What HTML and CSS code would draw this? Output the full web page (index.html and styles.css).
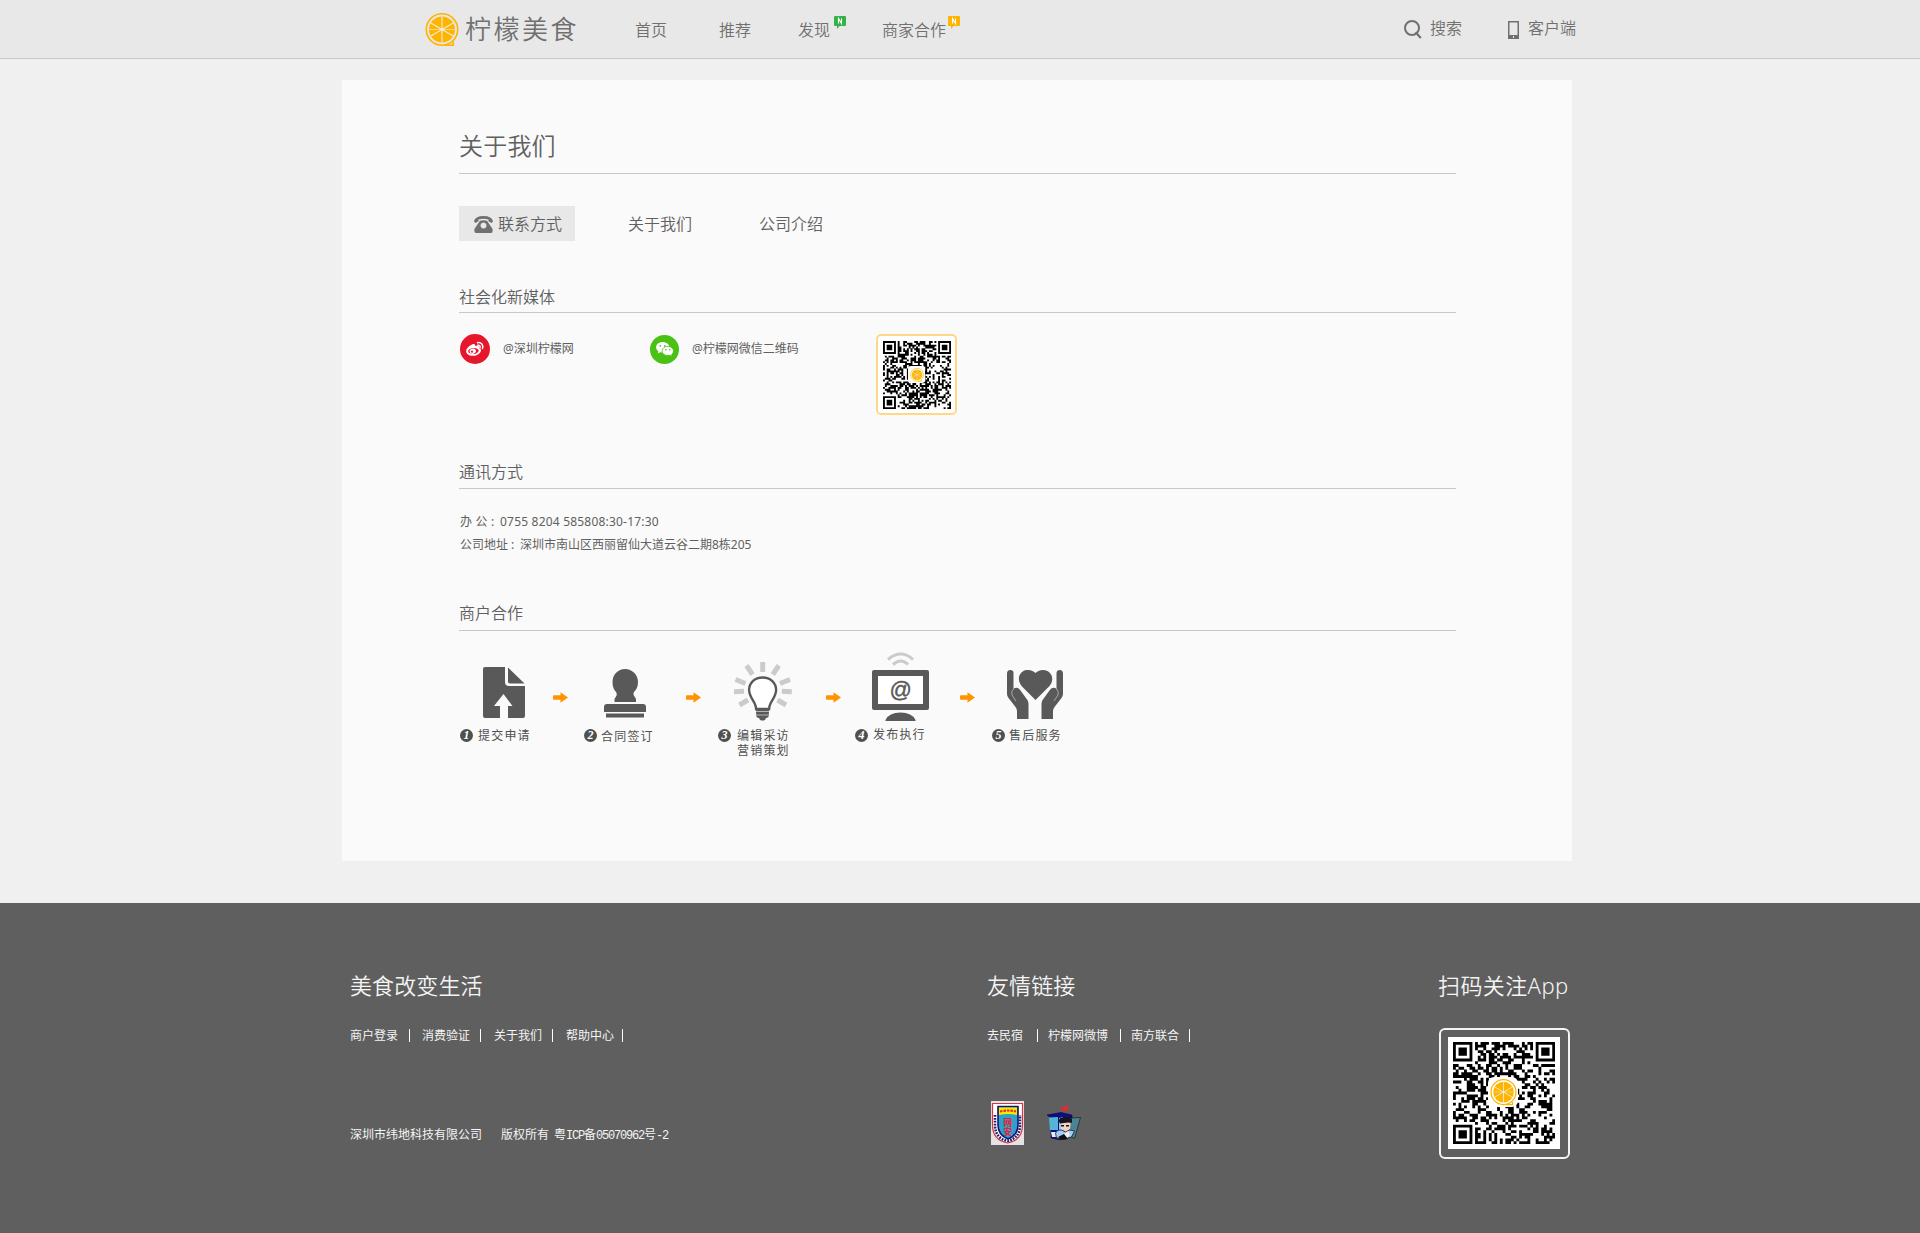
FILE: index.html
```html
<!DOCTYPE html>
<html lang="zh-CN">
<head>
<meta charset="utf-8">
<title>柠檬美食 - 关于我们</title>
<link rel="stylesheet" href="styles.css">
</head>
<body>
<svg class="defs" width="0" height="0">
  <symbol id="lemon" viewBox="0 0 34 34">
    <circle cx="17" cy="16.500" r="15.700" fill="none" stroke="#ffb400" stroke-width="1.600"/>
    <path d="M20 32.300h8.300v-3.600" fill="none" stroke="#ffb400" stroke-width="1.600"/>
    <circle cx="17" cy="16.500" r="13" fill="#ffb400"/>
    <path d="M17 3.500v26M5.700 10l22.600 13M28.300 10L5.700 23" stroke="#f0ece0" stroke-width="1.100"/>
    <path d="M4 16.500h26" stroke="#f0ece0" stroke-width=".6"/>
    <circle cx="17" cy="16.500" r="1.300" fill="#f0ece0"/>
  </symbol>
  <symbol id="arrow" viewBox="0 0 14 10"><path d="M.8 3h6.200V.2L14 5 7 9.900V7H.8Q0 7 0 6.200V3.800Q0 3 .8 3z" fill="#ff9300"/></symbol>
</svg>

<header class="topbar">
  <a class="logo"><svg class="logo-mark"><use href="#lemon"/></svg><span>柠檬美食</span></a>
  <nav class="nav">
    <a>首页</a><a>推荐</a>
    <a>发现<svg class="tag" viewBox="0 0 12 13"><path d="M1 0h10q1 0 1 1v8q0 1-1 1H5.500L3 13v-3H1q-1 0-1-1V1q0-1 1-1z" fill="#36b14a"/><path d="M4.500 7.500v-5l3 5v-5" fill="none" stroke="#fff" stroke-width="1.100"/></svg></a>
    <a>商家合作<svg class="tag" viewBox="0 0 12 13"><path d="M1 0h10q1 0 1 1v8q0 1-1 1H5.500L3 13v-3H1q-1 0-1-1V1q0-1 1-1z" fill="#ffb400"/><path d="M4.500 7.500v-5l3 5v-5" fill="none" stroke="#fff" stroke-width="1.100"/></svg></a>
  </nav>
  <div class="tools">
    <a><svg width="18" height="19" viewBox="0 0 18 19"><circle cx="8" cy="8" r="7" fill="none" stroke="#707070" stroke-width="2"/><path d="M11.500 12.300l5.300 5.700" stroke="#707070" stroke-width="2.200"/></svg><span>搜索</span></a>
    <a><svg width="11" height="18" viewBox="0 0 11 18"><path fill="#707070" fill-rule="evenodd" d="M0 0h11v18H0zM1.500 1.500v12.500h8V1.500zM5 15v2h1v-2z"/></svg><span>客户端</span></a>
  </div>
</header>

<main class="card">
  <h1>关于我们</h1>
  <div class="tabs">
    <a class="active"><svg width="19" height="17" viewBox="0 0 19 17"><path fill="#707070" d="M0 5.500Q1 0 9.500 0T19 5.500L17.600 7 14.500 5.200V3.600Q9.500 2 4.500 3.600v1.600L1.400 7z"/><path fill="#707070" fill-rule="evenodd" d="M6 4.700Q9.500 3.600 13 4.700L18.600 13v2.300q0 1.700-1.600 1.700H2Q.4 17 .4 15.300V13zM9.500 6.400a3 3 0 1 0 .01 0z"/></svg>联系方式</a>
    <a>关于我们</a><a>公司介绍</a>
  </div>

  <h2>社会化新媒体</h2>
  <div class="social">
    <div class="account weibo"><svg width="30" height="30" viewBox="0 0 30 30"><circle cx="15" cy="15" r="15" fill="#e6162d"/><path fill="#fff" fill-rule="evenodd" d="M12.600 10.300c1.800-.6 3 .3 2.600 2 2.500-1 4.400-.4 3.800 1.600 1.500.5 2.200 1.400 2 2.600-.4 3-4.300 5.400-8.300 5.300-3.800-.1-6.800-2-6.500-4.900.3-2.600 3.900-5.900 6.400-6.600zm.6 3.700c-3 .2-5.200 1.800-5 3.600.2 1.700 2.500 2.700 5.400 2.500 2.900-.3 5.200-2 5-3.700-.2-1.700-2.500-2.600-5.400-2.400z"/><ellipse cx="12.800" cy="17.200" rx="3.200" ry="2.600" fill="#fff" transform="rotate(-18 12.800 17.200)"/><circle cx="12" cy="17.700" r="1.100" fill="#e6162d"/><path d="M17.500 8.700c3.700-.7 6.200 2.200 5 5.700M17.800 11.200c1.600-.3 2.700.9 2.200 2.500" fill="none" stroke="#fff" stroke-width="1.500" stroke-linecap="round"/></svg><span>@深圳柠檬网</span></div>
    <div class="account wechat"><svg width="29" height="29" viewBox="0 0 29 29"><circle cx="14.500" cy="14.500" r="14.500" fill="#4bc015"/><path fill="#fff" d="M12.500 7c-3.700 0-6.400 2.300-6.400 5.300 0 1.700.9 3.100 2.300 4.100l-.7 2 2.400-1.200 2.400.4c4.300 0 7-2.300 7-5.300S16.200 7 12.500 7z"/><path fill="#fff" stroke="#4bc015" stroke-width=".8" d="M17.800 11.400c3.200 0 5.700 2 5.700 4.600 0 1.500-.8 2.700-1.900 3.500l.5 1.900-2.200-1.100-2.100.3c-3.300 0-5.700-2-5.700-4.600s2.400-4.600 5.700-4.600z"/><g fill="#4bc015"><circle cx="10.300" cy="10.800" r=".9"/><circle cx="14.800" cy="10.800" r=".9"/><circle cx="16" cy="14.800" r=".8"/><circle cx="19.700" cy="14.800" r=".8"/></g></svg><span>@柠檬网微信二维码</span></div>
    <div class="qr qr-small"><svg class="code" data-seed="7" viewBox="0 0 37 37"></svg><i><svg><use href="#lemon"/></svg></i></div>
  </div>

  <h2>通讯方式</h2>
  <div class="contact"><p class="phone"><span>办 公 : </span>0755 8204 585808:30-17:30</p><p class="address"><span>公司地址 : </span>深圳市南山区西丽留仙大道云谷二期8栋205</p></div>

  <h2>商户合作</h2>
  <div class="steps">
    <div class="step s1">
      <svg width="42" height="52" viewBox="0 0 42 52"><path fill="#595959" d="M2 0h20v15q0 4 4 4h16v30q0 2-2 2H25V39h4.500L20.500 27 11 39h6v12H2q-2 0-2-2V2q0-2 2-2z"/><path fill="#595959" d="M25 .5L41.500 16.500H27q-2 0-2-2z"/></svg>
      <p><b>1</b><span>提交申请</span></p>
    </div>
    <svg class="arrow"><use href="#arrow"/></svg>
    <div class="step s2">
      <svg width="42" height="49" viewBox="0 0 42 49"><path fill="#595959" d="M21 0C28 0 34 5.500 34 13c0 5-2 8-4 10-1 1.500-.5 3 .5 4.500L32 30v3H10.500v-3l1.500-2.500c1-1.500 1-3 0-4.500-2-2-3.500-5-3.500-10C8.500 5.500 14 0 21 0zM3 35h36q3 0 3 3v5H0v-5q0-3 3-3zM2 44.500h38V48.500H2z"/></svg>
      <p><b>2</b><span>合同签订</span></p>
    </div>
    <svg class="arrow"><use href="#arrow"/></svg>
    <div class="step s3">
      <svg width="58" height="60" viewBox="0 0 58 60"><path stroke="#cbcbcb" stroke-width="5" fill="none" d="M28.700 1v10M12.500 4.500l6 9M44.800 4.500l-6 9M1.500 18.500l10 4M56 18.500l-10 4M0 30.800l10-.5M57.800 30.800l-10-.5M5.500 44l8.500-5M52 44l-8.500-5"/><path fill="#fff" stroke="#595959" stroke-width="2.400" d="M28.600 16.500c-8 0-13.500 5.500-13.500 12.500 0 8 7 11.500 7 19h13c0-7.500 7-11 7-19 0-7-5.500-12.500-13.500-12.500z"/><path fill="#595959" d="M22 47.500h13v3.500l-.5 5-3 1.500q0 2-3 2t-3-2l-3-1.500-.5-5z"/><path stroke="#ccc" stroke-width=".8" d="M22 50.500h13M22.500 54h12"/></svg>
      <p><b>3</b><span>编辑采访<br>营销策划</span></p>
    </div>
    <svg class="arrow"><use href="#arrow"/></svg>
    <div class="step s4">
      <svg width="57" height="69" viewBox="0 0 57 69"><path d="M16 7.500Q29 -3.500 41 7.500M21 12.500Q29 5.500 36 12.500" fill="none" stroke="#cbcbcb" stroke-width="3"/><path fill="#595959" fill-rule="evenodd" d="M2 18h53q2 0 2 2v36q0 2-2 2H2q-2 0-2-2V20q0-2 2-2zM13.500 68Q17 60.500 28.500 60.500T43.500 68v1h-30z"/><path fill="#fff" d="M6 24h45v28H6z"/><text x="28.700" y="45" text-anchor="middle" class="at">@</text></svg>
      <p><b>4</b><span>发布执行</span></p>
    </div>
    <svg class="arrow"><use href="#arrow"/></svg>
    <div class="step s5">
      <svg width="56" height="49" viewBox="0 0 56 49"><path fill="#595959" d="M28.500 30L15 16.500C8 8 14-.5 21 0c3.500.2 6 1.500 7.500 3C30 1.500 32.500 0 36 0c8 0 12.500 9 6.500 16z"/><g id="hand" fill="#595959"><path d="M0 3.500Q0 0 3.300 0T6.500 3.500V20q0-2.500 3-2.300 2 0 3.500 2l6.500 9q2 2 2 5V49H10v-7.500Q10 38.500 8.500 37L1.500 28Q0 26 0 24z"/><path d="M6.500 19Q3.800 21 5 25l4 6" fill="none" stroke="#bbb" stroke-width=".8"/></g><use href="#hand" transform="matrix(-1 0 0 1 56 0)"/></svg>
      <p><b>5</b><span>售后服务</span></p>
    </div>
  </div>
</main>

<footer class="footer">
  <section class="about">
    <h3>美食改变生活</h3>
    <ul><li>商户登录</li><li>消费验证</li><li>关于我们</li><li>帮助中心</li></ul>
    <p class="copyright"><span>深圳市纬地科技有限公司</span><span>版权所有</span><span>粤<tt>ICP</tt>备<tt>05070962</tt>号<tt>-2</tt></span></p>
  </section>
  <section class="links">
    <h3>友情链接</h3>
    <ul><li>去民宿</li><li>柠檬网微博</li><li>南方联合</li></ul>
    <div class="badges">
      <svg width="33" height="44" viewBox="0 0 33 44"><path fill="#e4e2e4" d="M0 0h33v44H0z"/><path fill="#fff" stroke="#d8343f" stroke-width="1.200" d="M1.500 2.500h30V24q0 15-15 18Q1.500 39 1.500 24z"/><path d="M4 14v10q0 13 12.500 16Q29 37 29 24V14" fill="none" stroke="#20206e" stroke-width="2.600" stroke-dasharray="1.800 1.100"/><path fill="#2f9fce" stroke="#14146e" stroke-width="1.600" d="M7 5.500h20V24q0 10-10 14Q7 34 7 24z"/><path fill="#ffe600" d="M8 6.500h18V14q-9-2-18 0z"/><path d="M9 10.500q8-2 16 0" fill="none" stroke="#d23b22" stroke-width="2.200" stroke-dasharray="2.500 1"/><text x="16.700" y="24.500" text-anchor="middle" class="seal">网</text><text x="16.700" y="34" text-anchor="middle" class="seal">安</text></svg>
      <svg width="35" height="37" viewBox="0 0 35 37"><path fill="#0b0b91" stroke="#111" stroke-width=".6" d="M1 10L15 7.500 26 10v3L5 13zM5 13h10v22L5 33z"/><path fill="#56b4d6" d="M3 12.500l9-.5v13H4z"/><path fill="#8ed0e4" d="M13 13l4-1v14l-4 2z"/><path fill="#ddeefc" d="M5 27h9l-1 5H6z"/><path fill="#e02a35" d="M17.500 6q-4-1-2.500-4l3 .5L21 0q3 2 0 6z"/><path fill="#4a8391" stroke="#111" stroke-width=".6" d="M25 13l9.500-.5-6 21-6-3z"/><path fill="#f4d1c0" d="M15 17h10l-1 7-4 3-5-3z"/><path fill="#15151f" d="M12.500 16l1.500-3 7-1.500 5 2.500v4l-4-.5-8 1zM15 20h3v1.500h-3zM20 20h3v1.500h-3z"/><path fill="#a5cdf2" stroke="#16163a" stroke-width=".8" d="M9.500 28q2-4 6-3l4 2 4-2 5 1-3 6-7 2-8-1z"/><path fill="#eee" d="M18 29l4-3 2 4-3 3z"/><path fill="#111" d="M12 32l6-3 4 5-6 1z"/></svg>
    </div>
  </section>
  <section class="app">
    <h3>扫码关注App</h3>
    <div class="frame"><div class="qr qr-large"><svg class="code" data-seed="23" viewBox="0 0 37 37"></svg><i><svg><use href="#lemon"/></svg></i></div></div>
  </section>
</footer>
<script src="qr.js"></script>
</body>
</html>
```
FILE: styles.css
```css
* { box-sizing: border-box; margin: 0; padding: 0; }
body { background: #f0f0f0; color: #606060; font: 12px/18px "Noto Sans", "Noto Sans CJK SC", sans-serif; }
svg { display: block; flex: none; }
.defs { position: absolute; }
h1, h2, h3 { font-weight: 350; }

.topbar { display: flex; height: 59px; padding-left: 425px; background: #e8e8e8; border-bottom: 1px solid #c8c8c8; color: #707070; font-size: 16px; font-weight: 350; }
.logo { display: flex; width: 210px; padding-top: 12px; font-size: 26px; line-height: 34px; letter-spacing: 2.500px; font-weight: 350; }
.logo-mark { width: 34px; height: 34px; margin: 1px 6px 0 0; }
.nav { display: flex; padding-top: 18px; line-height: 24px; width: 769px; }
.nav a { display: flex; margin-right: 52px; }
.nav a:nth-child(2) { margin-right: 47px; }
.nav a:nth-child(3) { margin-right: 36px; }
.tag { width: 12px; height: 13px; margin: -2px 0 0 4px; }
.nav a:nth-child(4) .tag { margin-left: 2px; }
.tools { display: flex; padding-top: 16px; line-height: 24px; }
.tools a { display: flex; width: 104px; }
.tools a:last-child { width: auto; }
.tools svg { margin: 4px 8px 0 0; }
.tools a:last-child svg { margin-top: 5px; margin-right: 9px; }

.card { width: 1230px; height: 781px; margin: 21px 0 42px 342px; padding: 47px 116px 0 117px; background: #fafafa; }
h1 { height: 47px; border-bottom: 1px solid #c8c8c8; font-size: 24px; line-height: 38px; letter-spacing: .2px; }
.tabs { display: flex; margin-top: 32px; font-size: 16px; line-height: 37px; height: 35px; font-weight: 350; }
.tabs a { margin-right: 67px; }
.tabs .active { display: flex; gap: 5px; width: 116px; padding-left: 15px; margin-right: 53px; background: #e8e8e8; }
.tabs svg { margin-top: 10px; }
h2 { height: 32px; border-bottom: 1px solid #c8c8c8; font-size: 16px; line-height: 30px; }
.tabs + h2 { margin-top: 40px; line-height: 32px; }
.contact + h2 { line-height: 29px; }
.social { display: flex; height: 144px; padding: 21px 0 0 1px; line-height: 29px; }
.account { display: flex; gap: 13px; width: 190px; }
.wechat { width: 226px; padding-top: 1px; line-height: 27px; }
.qr { position: relative; background: #fff; }
.qr i { position: absolute; inset: 0; margin: auto; background: #fff; display: flex; align-items: center; justify-content: center; }
.qr-small { width: 81px; height: 81px; padding: 5px; border: 2px solid #ffd887; border-radius: 5px; }
.qr-small .code { width: 68px; height: 68px; }
.qr-small i { width: 17px; height: 17px; border-radius: 3px; }
.qr-small i svg { width: 14px; height: 14px; }
.contact { height: 110px; padding: 21px 0 0 1px; line-height: 23px; }
.contact span { display: inline-block; white-space: pre; }
.phone { letter-spacing: .2px; }
.phone span { width: 40px; }
.address span { width: 60px; }
.steps { display: flex; padding: 21px 0 0; }
.arrow { width: 15px; height: 11px; margin: 40px -1px 0 0; }
.s1 + .arrow { margin-left: 1px; }
.step p { display: flex; line-height: 15px; letter-spacing: 1.200px; white-space: nowrap; color: #505050; }
.step b { flex: none; width: 13px; height: 13px; margin-right: 5px; border-radius: 50%; background: #505050; color: #fff; font: italic bold 12px/13px "Liberation Serif", serif; text-align: center; letter-spacing: 0; }
.step span { margin-top: -1px; }
.s1 { width: 93px; padding: 15px 0 0 1px; }
.s1 > svg { margin: 0 0 10px 23px; }
.s2 { width: 119px; padding: 17px 0 0 17px; }
.s2 > svg { margin: 0 0 11px 20px; }
.s2 b { margin-right: 4px; }
.s2 span { margin-top: 0; }
.s3 { width: 126px; padding: 9px 0 0 18px; }
.s3 > svg { margin: 0 0 8px 16px; }
.s3 b { margin-right: 6px; }
.s4 { width: 120px; padding: 0 0 0 15px; }
.s4 > svg { margin: 0 0 8px 17px; }
.s4 span { margin-top: -2px; }
.s5 { width: 90px; padding: 17px 0 0 18px; }
.s5 > svg { margin: 1px 0 10px 15px; }
.s5 b { margin-right: 4px; }
.at { font: 22px "Liberation Sans", sans-serif; fill: #595959; stroke: #595959; stroke-width: .4px; }

.footer { display: flex; height: 330px; padding: 65px 0 0 350px; background: #5f5f5f; color: #f4f4f4; line-height: 17px; }
h3 { height: 35px; font-size: 22px; line-height: 34px; white-space: nowrap; letter-spacing: .1px; }
.about { width: 637px; }
.links { width: 451px; }
.app h3 { letter-spacing: .4px; }
ul { display: flex; height: 16px; margin-top: 24px; list-style: none; }
li { display: flex; width: 72px; }
li::after { content: ""; width: 1px; height: 13px; margin: 2px 0 0 11px; background: #fff; }
.about li:nth-child(n+2)::after { margin-left: 10px; }
.about li:nth-child(4)::after { margin-left: 8px; }
.links li { width: 61px; }
.links li:first-child::after { margin-left: 14px; }
.links li:nth-child(2) { width: 83px; }
.links li:nth-child(2)::after { margin-left: 12px; }
.links li:nth-child(3)::after { margin-left: 10px; }
.copyright { display: flex; margin-top: 83px; }
.copyright span:first-child { margin-right: 19px; }
.copyright span:nth-child(2) { margin-right: 5px; }
tt { display: inline-block; font: 12px/16px "Liberation Mono", monospace; letter-spacing: -1.200px; }
.badges { display: flex; gap: 22px; margin: 58px 0 0 4px; }
.badges svg:last-child { margin-top: 4px; }
.seal { font: bold 9px "Noto Sans CJK SC", sans-serif; fill: #e3262f; }
.frame { width: 131px; height: 131px; margin: 25px 0 0 1px; padding: 7px; border: 2px solid #f4f4f4; border-radius: 6px; }
.qr-large { width: 112px; height: 112px; padding: 5px; }
.qr-large .code { width: 102px; height: 102px; }
.qr-large i { width: 30px; height: 30px; border-radius: 6px; translate: -1px -1px; }
.qr-large i svg { width: 27px; height: 27px; }
```
FILE: qr.js
```js
// Draws a 37-module code: finder patterns, then data cells that thin out to the lower right.
const SIZE = 37;

function isDark(x, y, next) {
  const data = next() < (x > 22 && y > 8 ? 0.4 : 0.54);
  for (const [cx, cy] of [[3, 3], [33, 3], [3, 33]]) {
    const d = Math.max(Math.abs(x - cx), Math.abs(y - cy));
    if (d <= 4) return d !== 2 && d !== 4;
  }
  return data;
}

document.querySelectorAll(".code").forEach((svg) => {
  let state = Number(svg.dataset.seed);
  const next = () => {
    state = (state * 1664525 + 1013904223) >>> 0;
    return state / 4294967296;
  };
  let d = "";
  for (let y = 0; y < SIZE; y++) {
    for (let x = 0; x < SIZE; x++) {
      if (isDark(x, y, next)) d += `M${x} ${y}h1.03v1.03h-1.03z`;
    }
  }
  const path = document.createElementNS("http://www.w3.org/2000/svg", "path");
  path.setAttribute("d", d);
  svg.appendChild(path);
});
```
